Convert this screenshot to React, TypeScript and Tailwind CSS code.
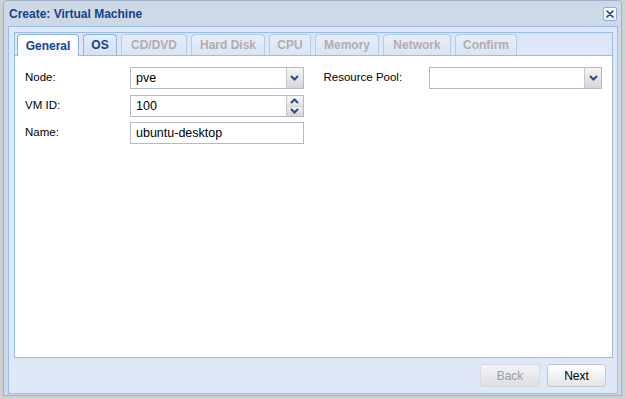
import React from "react";

const Chevron = ({ up = false }: { up?: boolean }) => (
  <svg width="9" height="6" viewBox="0 0 9 6" className="block">
    <polyline
      points={up ? "1,5 4.5,1.5 8,5" : "1,1 4.5,4.5 8,1"}
      fill="none"
      stroke="#2a4c83"
      strokeWidth="2"
    />
  </svg>
);

const Trigger = () => (
  <div className="w-[17px] h-full border-l border-[#c5c8d4] bg-gradient-to-b from-[#f6f6f6] to-[#d6d6d6] flex items-center justify-center">
    <Chevron />
  </div>
);

const Spinner = () => (
  <div className="w-[17px] h-full border-l border-[#c5c8d4] flex flex-col">
    <div className="flex-1 bg-gradient-to-b from-[#f8f8f8] to-[#e2e2e2] flex items-center justify-center border-b border-[#cfd2dc]">
      <Chevron up />
    </div>
    <div className="flex-1 bg-gradient-to-b from-[#ececec] to-[#d6d6d6] flex items-center justify-center">
      <Chevron />
    </div>
  </div>
);

const Field = ({ value, kind }: { value: string; kind?: "combo" | "spin" }) => (
  <div className="flex-1 h-[22px] border border-[#b5b8c8] bg-white flex">
    <div className="flex-1 pl-[5px] flex items-center text-[12.5px] text-black leading-none">{value}</div>
    {kind === "combo" && <Trigger />}
    {kind === "spin" && <Spinner />}
  </div>
);

const Row = ({ label, children, className = "" }: { label: string; children: React.ReactNode; className?: string }) => (
  <div className={"flex items-center h-[22px] " + className}>
    <div className="w-[105px] text-[11.5px] text-black">{label}</div>
    {children}
  </div>
);

type Tab = { label: string; w: string; state: "active" | "enabled" | "disabled" };

const tabs: Tab[] = [
  { label: "General", w: "w-[62px]", state: "active" },
  { label: "OS", w: "w-[34px]", state: "enabled" },
  { label: "CD/DVD", w: "w-[66px]", state: "disabled" },
  { label: "Hard Disk", w: "w-[74px]", state: "disabled" },
  { label: "CPU", w: "w-[42px]", state: "disabled" },
  { label: "Memory", w: "w-[64px]", state: "disabled" },
  { label: "Network", w: "w-[68px]", state: "disabled" },
  { label: "Confirm", w: "w-[62px]", state: "disabled" },
];

export default function App() {
  return (
    <div className="w-[626px] h-[399px] bg-[#cfd0d2] overflow-hidden font-['Liberation_Sans',Arial,sans-serif]">
      <div className="ml-[3px] w-[619px] h-[396px] border border-[#9fb0c6] rounded-t-[4px] bg-[#ced9e7] flex flex-col">
        {/* header */}
        <div className="h-[25px] flex items-center justify-between pl-[5px] pr-[4px]">
          <span className="text-[12px] font-bold text-[#15428b] leading-none">Create: Virtual Machine</span>
          <div className="w-[14px] h-[14px] border border-[#8fb0dc] rounded-[2px] bg-gradient-to-b from-white to-[#e4ecf7] flex items-center justify-center">
            <svg width="10" height="10" viewBox="0 0 10 10">
              <path d="M2 2 L8 8 M8 2 L2 8" stroke="#1d3f7a" strokeWidth="1.6" strokeLinecap="round" />
            </svg>
          </div>
        </div>
        {/* window body */}
        <div className="ml-[4px] mr-[3px] mb-[1px] flex-1 border border-[#99bbe8] bg-[#dfe8f6] flex flex-col">
          <div className="pl-[5px] pr-[4px] pt-[5px]">
            {/* tab panel */}
            <div className="h-[326px] flex flex-col">
              <div className="border-t border-x border-[#99bbe8] bg-gradient-to-b from-[#dae5f3] to-[#dfe8f6]">
                <div className="flex gap-[4px] pl-[2px] pt-[1px] h-[23px] items-start border-b border-[#99bbe8]">
                  {tabs.map((t) => {
                    const base =
                      t.w +
                      " rounded-t-[4px] border border-b-0 flex items-center justify-center text-[12px] font-bold leading-none";
                    if (t.state === "active")
                      return (
                        <div key={t.label} className={base + " h-[22px] relative z-10 border-[#8db2e3] bg-gradient-to-b from-white to-[#f4f8fd] text-[#15428b]"}>
                          {t.label}
                        </div>
                      );
                    if (t.state === "enabled")
                      return (
                        <div key={t.label} className={base + " h-[21px] border-[#8db2e3] bg-gradient-to-b from-[#e4eefb] to-[#d3e1f3] text-[#15428b]"}>
                          {t.label}
                        </div>
                      );
                    return (
                      <div key={t.label} className={base + " h-[21px] border-[#b3cbea] bg-gradient-to-b from-[#e6eefa] to-[#d9e5f5] text-[#b7abab]"}>
                        {t.label}
                      </div>
                    );
                  })}
                </div>
              </div>
              <div className="flex-1 bg-white border-x border-b border-[#99bbe8] pt-[11px] grid grid-cols-2">
                <div className="pl-[10px] pr-[10px] flex flex-col">
                  <Row label="Node:">
                    <Field value="pve" kind="combo" />
                  </Row>
                  <Row label="VM ID:" className="mt-[6px]">
                    <Field value="100" kind="spin" />
                  </Row>
                  <Row label="Name:" className="mt-[5px]">
                    <Field value="ubuntu-desktop" />
                  </Row>
                </div>
                <div className="pl-[10px] pr-[10px] flex flex-col">
                  <Row label="Resource Pool:">
                    <Field value="" kind="combo" />
                  </Row>
                </div>
              </div>
            </div>
          </div>
          {/* buttons */}
          <div className="flex justify-end gap-[7px] pt-[6px] pr-[11px]">
            <div className="w-[60px] h-[23px] rounded-[3px] border border-[#d5d8dc] bg-gradient-to-b from-[#f3f4f6] to-[#dcdfe3] flex items-center justify-center text-[12px] text-[#9a9ea4]">
              Back
            </div>
            <div className="w-[59px] h-[23px] rounded-[3px] border border-[#c4c8ce] bg-gradient-to-b from-white to-[#e3e5e8] flex items-center justify-center text-[12px] text-black">
              Next
            </div>
          </div>
        </div>
      </div>
    </div>
  );
}
